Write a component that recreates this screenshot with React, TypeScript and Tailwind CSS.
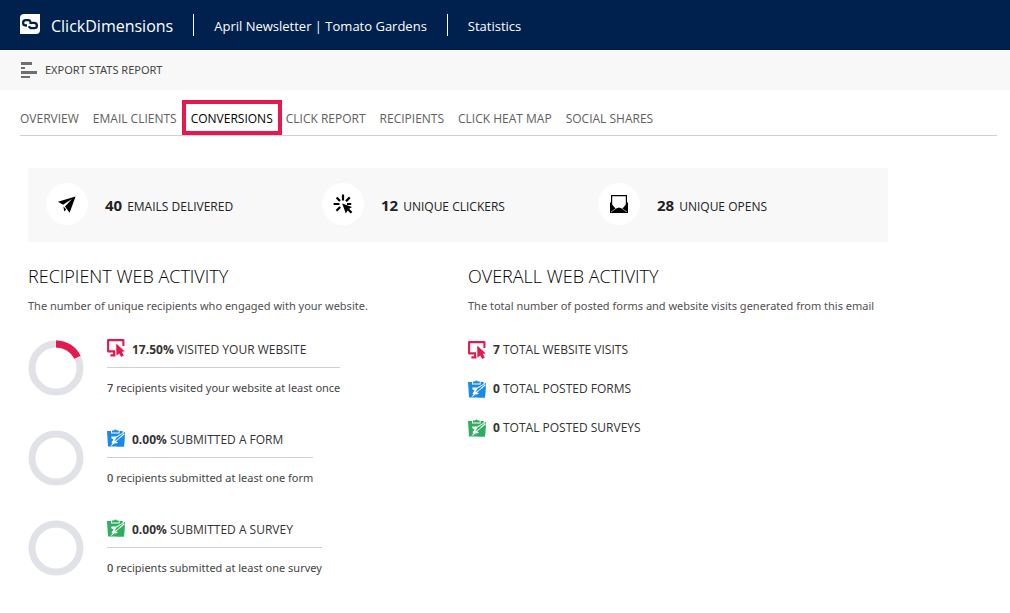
import type { ReactNode } from "react";
import { clsx } from "clsx";

const tabs = ["Overview", "Email Clients", "Conversions", "Click Report", "Recipients", "Click Heat Map", "Social Shares"];
const activeTab = "Conversions";

const RED = "#e6194f";
const BLUE = "#1a8ae6";
const GREEN = "#2fae60";

function LogoMark() {
  return (
    <svg width="20" height="20" viewBox="0 0 20 20" aria-hidden="true">
      <path d="M4 0H20V16a4 4 0 0 1-4 4H0V4a4 4 0 0 1 4-4Z" fill="#fff" />
      <g fill="none" stroke="#00204d" strokeWidth="2.3">
        <path d="M7 11.5H5.8A2.7 2.7 0 0 1 5.8 6.1H8.2Q10 6.1 10.6 7.8" />
        <path d="M9.4 8.8H14.2A2.7 2.7 0 0 1 14.2 14.2H11.6Q9.6 14.2 9 12.2" />
      </g>
    </svg>
  );
}

function ExportIcon() {
  return (
    <svg width="16" height="16" viewBox="0 0 16 16" fill="#707070" aria-hidden="true">
      <path d="M0 0H11V3H0ZM0 5H4V7H0ZM0 9H16V12H0ZM0 14H9V16H0Z" />
    </svg>
  );
}

function PlaneIcon() {
  return (
    <svg width="18" height="17" viewBox="0 0 18 17" aria-hidden="true">
      <path d="M17.6 .4 0 5.8 5 8.8 14 3 7 10.4 11.6 16.8Z" />
      <path d="M5.4 10.2 8.2 13.4 6.2 15.4Z" />
    </svg>
  );
}

function ClickIcon() {
  return (
    <svg width="20" height="20" viewBox="0 0 20 20" aria-hidden="true">
      <path
        d="M10 .6V6.6M3.6 3.4 7 7M.6 10H6.4M3.4 16.8 7.2 13M16.8 3.4 13 7.2M14 10H18.2"
        stroke="#000"
        strokeWidth="2.2"
      />
      <path d="M9.2 9.4 19 13 16.2 14.8 19.4 18 17.8 19.4 14.6 16.4 12.8 19.4Z" />
    </svg>
  );
}

function OpenIcon() {
  return (
    <svg width="18" height="18" viewBox="0 0 18 18" aria-hidden="true">
      <path fillRule="evenodd" d="M1 0H17V7L18 8V18H0V8L1 7ZM2.2 1.2V9.5L5.6 13.8 9 12.6 12.4 13.8 15.8 9.5V1.2Z" />
      <path d="M1 17 5.6 13.8M17 17 12.4 13.8" stroke="#fff" strokeWidth=".6" />
    </svg>
  );
}

function VisitIcon({ color }: { color: string }) {
  return (
    <svg width="18" height="18" viewBox="0 0 18 18" aria-hidden="true" className="shrink-0">
      <path
        d="M8 12.4H1.1V1.1H16.4V7M7 12.4V16M3.4 16.4H8.4"
        fill="none"
        stroke={color}
        strokeWidth="2.1"
        strokeLinejoin="round"
      />
      <path d="M9.2 4.6 17.8 12.4 14.8 12.8 16.8 16.6 14.2 17.9 12.2 14.4 9.4 16.8Z" fill={color} />
    </svg>
  );
}

function ClipboardIcon({ color }: { color: string }) {
  return (
    <svg width="18" height="18" viewBox="0 0 18 18" aria-hidden="true" className="shrink-0">
      <path d="M0 2H4V4.6H12.6V2H15.6V4.4L18 2.8 17 17.6H1Z" fill={color} />
      <path d="M5 3.6V1.4H7A1.6 1.6 0 0 1 9.8 1.4H11.8V3.6Z" fill={color} />
      <path
        d="M4.2 7.4H9.2L16.2 3.6 17.8 5.2 11.6 10.2 9 12.6 11 13.2 8 15.2 3.4 17 5.6 14.2 4.4 13.6 6.6 10.4 4.6 9.6Z"
        fill="#fff"
      />
      <path d="M18 3 9.4 8.8 7.2 12.4 11.2 9.8Z" fill={color} />
      <path d="M17.6 6.6 17 17.6H9.6Z" fill={color} />
      <path d="M4.4 16.8 7.6 14.2 9.6 13.8 7 16Z" fill={color} />
    </svg>
  );
}

function Donut({ percent }: { percent: number }) {
  const circumference = 2 * Math.PI * 24;
  return (
    <svg width="56" height="56" viewBox="0 0 56 56" fill="none" strokeWidth="7" className="shrink-0" role="img" aria-label={`${percent}%`}>
      <circle cx="28" cy="28" r="24" stroke="#e1e2e7" />
      {percent > 0 && (
        <circle
          cx="28"
          cy="28"
          r="24"
          stroke={RED}
          strokeDasharray={`${(circumference * percent) / 100} ${circumference}`}
          transform="rotate(-90 28 28)"
        />
      )}
    </svg>
  );
}

const summary = [
  { value: 40, label: "Emails Delivered", icon: <PlaneIcon /> },
  { value: 12, label: "Unique Clickers", icon: <ClickIcon /> },
  { value: 28, label: "Unique Opens", icon: <OpenIcon /> },
];

const recipientActivity = [
  { percent: 17.5, label: "Visited your website", count: 7, note: "recipients visited your website at least once", icon: <VisitIcon color={RED} /> },
  { percent: 0, label: "Submitted a form", count: 0, note: "recipients submitted at least one form", icon: <ClipboardIcon color={BLUE} /> },
  { percent: 0, label: "Submitted a survey", count: 0, note: "recipients submitted at least one survey", icon: <ClipboardIcon color={GREEN} /> },
];

const overallActivity = [
  { count: 7, label: "Total website visits", icon: <VisitIcon color={RED} /> },
  { count: 0, label: "Total posted forms", icon: <ClipboardIcon color={BLUE} /> },
  { count: 0, label: "Total posted surveys", icon: <ClipboardIcon color={GREEN} /> },
];

function Section({ title, subtitle, children }: { title: string; subtitle: string; children: ReactNode }) {
  return (
    <section>
      <h2 className="text-[18px] leading-6 font-light text-black uppercase">{title}</h2>
      <p className="mt-2 font-['Noto_Sans',sans-serif] text-[11px] leading-5 whitespace-nowrap text-[#505050]">{subtitle}</p>
      {children}
    </section>
  );
}

export default function App() {
  return (
    <div className="min-h-screen bg-white font-['Open_Sans','Noto_Sans',sans-serif] text-[#333]">
      <header className="flex h-[50px] items-center bg-[#00204d] px-5 text-white">
        <div className="mb-[2px]">
          <LogoMark />
        </div>
        <span className="ml-[11px] pt-[2px] text-[16px]">ClickDimensions</span>
        <span className="mx-5 h-[22px] w-px bg-white" />
        <span className="pt-1 text-[13px]">April Newsletter | Tomato Gardens</span>
        <span className="mx-5 h-[22px] w-px bg-white" />
        <span className="pt-1 text-[13px]">Statistics</span>
      </header>

      <div className="flex h-10 items-center bg-[#f8f8f8] px-[21px]">
        <button className="flex items-center gap-2 text-[#444]">
          <ExportIcon />
          <span className="pt-px font-['Noto_Sans',sans-serif] text-[11px] uppercase">Export Stats Report</span>
        </button>
      </div>

      <nav className="mr-[13px] ml-5 flex border-b border-[#d0d0d0] pt-[10px]">
        {tabs.map((tab) => (
          <a
            key={tab}
            href="#"
            className={clsx(
              "flex h-[35px] items-center pt-[2px] text-[12px] font-medium whitespace-nowrap uppercase",
              tab === activeTab ? "-ml-[9px] mr-1 border-4 border-[#e6194f] px-[5px] text-black" : "mr-[14px] text-[#606060]"
            )}
          >
            {tab}
          </a>
        ))}
      </nav>

      <main className="px-7 pt-8">
        <div className="grid max-w-[860px] grid-cols-[276px_276px_1fr] bg-[#f8f8f8] py-[17px] pl-[18px]">
          {summary.map(({ value, label, icon }) => (
            <div key={label} className="flex items-center gap-[17px]">
              <div className="-mt-[2px] flex size-[42px] items-center justify-center rounded-full bg-white">{icon}</div>
              <p className="flex items-baseline gap-[5px] pt-px text-[12px] leading-6 text-[#222] uppercase">
                <b className="text-[15px]">{value}</b> {label}
              </p>
            </div>
          ))}
        </div>

        <div className="mt-[22px] grid grid-cols-[440px_1fr]">
          <Section title="Recipient Web Activity" subtitle="The number of unique recipients who engaged with your website.">
            <ul className="mt-6 space-y-8">
              {recipientActivity.map(({ percent, label, count, note, icon }) => (
                <li key={label} className="flex gap-[23px]">
                  <Donut percent={percent} />
                  <div>
                    <h3 className="-mt-[3px] flex h-[31px] items-start gap-[7px] border-b border-[#d0d0d0] text-[12px] leading-[26px] font-medium uppercase">
                      <span className="pt-[2px]">{icon}</span>
                      <span>
                        <b>{percent.toFixed(2)}%</b> {label}
                      </span>
                    </h3>
                    <p className="mt-[10px] font-['Noto_Sans',sans-serif] text-[11px] leading-5 text-[#444]">
                      <span className="font-medium">{count}</span> {note}
                    </p>
                  </div>
                </li>
              ))}
            </ul>
          </Section>

          <Section title="Overall Web Activity" subtitle="The total number of posted forms and website visits generated from this email">
            <ul className="mt-[22px] space-y-[15px]">
              {overallActivity.map(({ count, label, icon }) => (
                <li key={label} className="flex items-center gap-[7px] text-[12px] leading-6 font-medium uppercase">
                  {icon}
                  <span>
                    <b>{count}</b> {label}
                  </span>
                </li>
              ))}
            </ul>
          </Section>
        </div>
      </main>
    </div>
  );
}
